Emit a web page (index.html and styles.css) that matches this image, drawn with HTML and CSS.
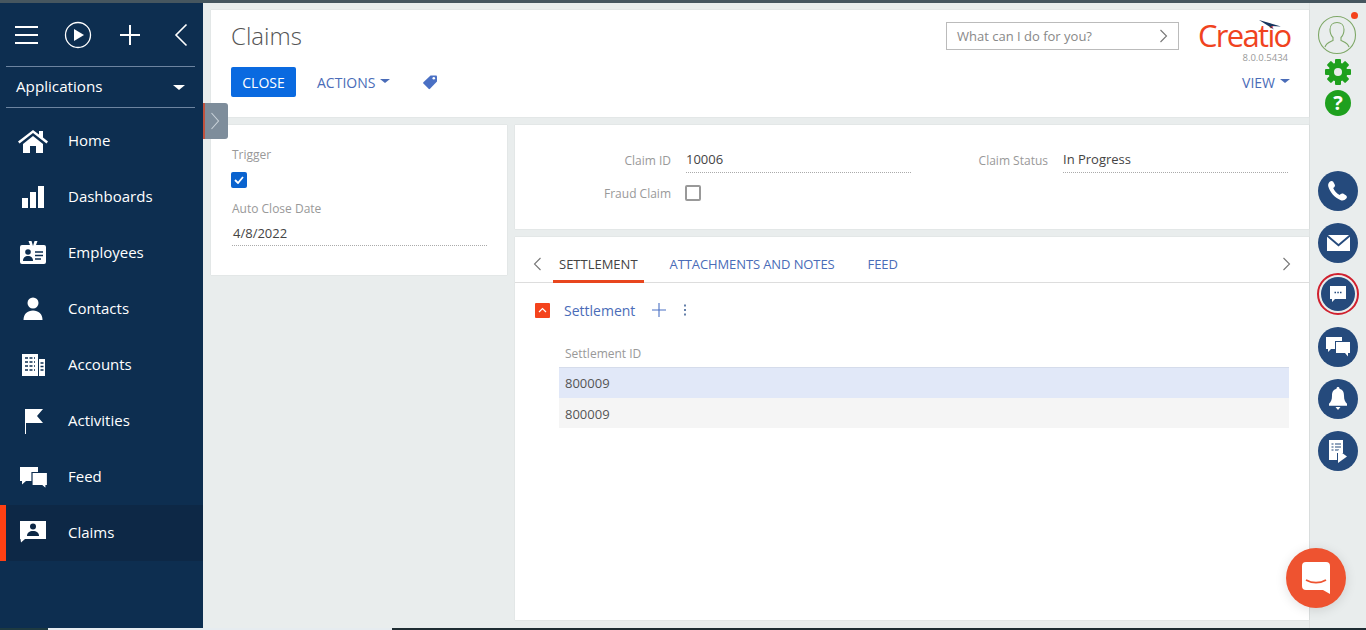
FILE: index.html
```html
<!DOCTYPE html>
<html lang="en">
<head>
<meta charset="UTF-8">
<title>Claims</title>
<link rel="stylesheet" href="styles.css">
</head>
<body>
<div class="app">
    <div class="strip-top"></div>
    <div class="shell">
        <!-- Menu lateral -->
        <aside class="sidebar">
            <div class="side-tools">
                <svg class="tool-burger" width="24" height="20" viewBox="0 0 24 20"><path d="M0 2h23M0 10h23M0 18h23" stroke="#fff" stroke-width="2"/></svg>
                <svg class="tool-play" width="28" height="28" viewBox="0 0 28 28"><circle cx="14" cy="14" r="12.5" fill="none" stroke="#fff" stroke-width="1.3"/><path d="M10 8l10 6-10 6z" fill="#fff"/></svg>
                <svg class="tool-plus" width="22" height="22" viewBox="0 0 22 22"><path d="M11 1v20M1 11h20" stroke="#fff" stroke-width="2"/></svg>
                <svg class="tool-back" width="14" height="24" viewBox="0 0 14 24"><path d="M12.5 1.5L2 12l10.5 10.5" fill="none" stroke="#fff" stroke-width="1.6"/></svg>
            </div>
            <div class="side-apps">
                <span class="apps-name">Applications</span>
                <span class="caret-white"></span>
            </div>
            <nav class="side-nav">
                <a class="nav-item">
                    <svg class="nav-icon" viewBox="0 0 32 32"><path d="M1 17.500L16 6l6 4.500V7h4v6.500l5 4-1.500 2L16 9 2.500 19.500z" fill="#fff"/><path d="M6 20L16 12l10 8v9h-7v-7h-6v7H6z" fill="#fff"/></svg>
                    <span>Home</span>
                </a>
                <a class="nav-item">
                    <svg class="nav-icon" viewBox="0 0 32 32"><path d="M5 18h6v10H5zM13 12h6v16h-6zM21 6h6v22h-6z" fill="#fff"/></svg>
                    <span>Dashboards</span>
                </a>
                <a class="nav-item">
                    <svg class="nav-icon" viewBox="0 0 32 32"><path d="M5 9h8l-1.500-4h9L19 9h8a2 2 0 0 1 2 2v15a2 2 0 0 1-2 2H5a2 2 0 0 1-2-2V11a2 2 0 0 1 2-2z" fill="#fff"/><path d="M14.500 5h3L16 10z" fill="#0d2e50"/><circle cx="11" cy="16" r="2.800" fill="#0d2e50"/><path d="M6 25c0-3.500 2-5 5-5s5 1.500 5 5z" fill="#0d2e50"/><path d="M18 16h8M18 19.500h8M18 23h6" stroke="#0d2e50" stroke-width="1.300"/></svg>
                    <span>Employees</span>
                </a>
                <a class="nav-item">
                    <svg class="nav-icon" viewBox="0 0 32 32"><circle cx="16" cy="11" r="5.500" fill="#fff"/><path d="M6.500 28c0-6 4-9.500 9.500-9.500s9.500 3.500 9.500 9.500z" fill="#fff"/></svg>
                    <span>Contacts</span>
                </a>
                <a class="nav-item">
                    <svg class="nav-icon" viewBox="0 0 32 32"><path d="M5 6h16v22H5zM22 11h6v17h-6z" fill="#fff"/><path d="M8 10h10M8 14h10M8 18h10M8 22h10" stroke="#0d2e50" stroke-width="1.500" stroke-dasharray="3 1.500"/><path d="M23.500 15h3M23.500 18.500h3M23.500 22h3" stroke="#0d2e50" stroke-width="1.300"/></svg>
                    <span>Accounts</span>
                </a>
                <a class="nav-item">
                    <svg class="nav-icon" viewBox="0 0 32 32"><path d="M8 5h1v25H8z" fill="#fff"/><path d="M8 5h18l-6 7 6 7H8z" fill="#fff"/></svg>
                    <span>Activities</span>
                </a>
                <a class="nav-item">
                    <svg class="nav-icon" viewBox="0 0 32 32"><path d="M3 7h18v14H9l-4 3.500V21H3z" fill="#fff"/><path d="M15 12.500h15.500v13H29V29l-4-3.500H15z" fill="#fff" stroke="#0d2e50" stroke-width="1.200"/></svg>
                    <span>Feed</span>
                </a>
                <a class="nav-item nav-active">
                    <svg class="nav-icon" viewBox="0 0 32 32"><path d="M3 5h26v18H8l-4 3.500-.5-3.500H3z" fill="#fff"/><circle cx="16" cy="10.500" r="3" fill="#0d2846"/><path d="M10 20c0-3.500 2.500-5 6-5s6 1.500 6 5z" fill="#0d2846"/></svg>
                    <span>Claims</span>
                </a>
            </nav>
        </aside>

        <main class="content">
            <section class="card head">
                <div class="head-top">
                    <h1 class="page-title">Claims</h1>
                    <div class="search-box">
                        <span>What can I do for you?</span>
                        <svg width="9" height="14" viewBox="0 0 9 14"><path d="M1.500 1L7.500 7l-6 6" fill="none" stroke="#777" stroke-width="1.100"/></svg>
                    </div>
                    <div class="logo">
                        <svg class="logo-swoosh" width="24" height="10" viewBox="0 0 24 10"><path d="M1 0l22 6.500-10-.5 3 3.500z" fill="#17365f"/></svg>
                        <div class="logo-name">Creatio</div>
                        <div class="logo-version">8.0.0.5434</div>
                    </div>
                </div>
                <div class="head-bottom">
                    <button class="btn-close">CLOSE</button>
                    <span class="link-caps">ACTIONS<span class="caret-blue"></span></span>
                    <svg class="tag-icon" width="16" height="16" viewBox="0 0 16 16"><path d="M8.500 1.500h5.500a1 1 0 0 1 1 1v5L8 14.800a1 1 0 0 1-1.400 0L1.400 9.600a1 1 0 0 1 0-1.400z" fill="#4a70c4"/><circle cx="11.800" cy="4.300" r="1.300" fill="#fff"/></svg>
                    <span class="link-caps view-link">VIEW<span class="caret-blue"></span></span>
                </div>
            </section>

            <div class="columns">
                <section class="card side-card">
                    <div class="lbl">Trigger</div>
                    <div class="check check-on">
                        <svg width="10" height="8" viewBox="0 0 10 8"><path d="M1 4l3 3 5-6" fill="none" stroke="#fff" stroke-width="1.800"/></svg>
                    </div>
                    <div class="lbl lbl-date">Auto Close Date</div>
                    <div class="val val-date">4/8/2022</div>
                </section>

                <div class="main-col">
                    <section class="card fields">
                        <div class="field-row">
                            <div class="field">
                                <span class="lbl field-lbl">Claim ID</span>
                                <span class="val field-val">10006</span>
                            </div>
                            <div class="field">
                                <span class="lbl field-lbl">Claim Status</span>
                                <span class="val field-val">In Progress</span>
                            </div>
                        </div>
                        <div class="field field-check">
                            <span class="lbl field-lbl">Fraud Claim</span>
                            <span class="check check-off"></span>
                        </div>
                    </section>

                    <section class="card tabs-card">
                        <div class="tabs">
                            <svg class="tab-arrow" width="9" height="14" viewBox="0 0 9 14"><path d="M7.500 1L1.500 7l6 6" fill="none" stroke="#777" stroke-width="1.100"/></svg>
                            <span class="tab tab-active">SETTLEMENT</span>
                            <span class="tab">ATTACHMENTS AND NOTES</span>
                            <span class="tab tab-feed">FEED</span>
                            <svg class="tab-arrow tab-next" width="9" height="14" viewBox="0 0 9 14"><path d="M1.500 1L7.500 7l-6 6" fill="none" stroke="#777" stroke-width="1.100"/></svg>
                        </div>
                        <div class="detail-head">
                            <span class="collapse">
                                <svg width="9" height="6" viewBox="0 0 9 6"><path d="M1 5l3.500-3.500L8 5" fill="none" stroke="#fff" stroke-width="1.200"/></svg>
                            </span>
                            <span class="detail-title">Settlement</span>
                            <svg class="detail-plus" width="14" height="14" viewBox="0 0 14 14"><path d="M7 0v14M0 7h14" stroke="#4a70c4" stroke-width="1.100"/></svg>
                            <svg class="detail-more" width="4" height="12" viewBox="0 0 4 12"><path d="M2 .5v2M2 5v2M2 9.500v2" stroke="#4a6a9c" stroke-width="1.700"/></svg>
                        </div>
                        <div class="grid-list">
                            <div class="grid-head">Settlement ID</div>
                            <div class="grid-row grid-selected">800009</div>
                            <div class="grid-row grid-alt">800009</div>
                        </div>
                    </section>
                </div>
            </div>

            <!-- Alça de abrir o painel -->
            <div class="panel-handle">
                <svg width="10" height="18" viewBox="0 0 10 18"><path d="M1.500 1l7 8-7 8" fill="none" stroke="#c9d2da" stroke-width="1.100"/></svg>
            </div>
        </main>

        <!-- Barra direita -->
        <aside class="rail">
            <div class="rail-user">
                <svg width="40" height="40" viewBox="0 0 40 40"><circle cx="20" cy="20" r="18.500" fill="none" stroke="#7fa868" stroke-width="1.100"/><path d="M8 32c1-4 5-5 8-6.500v-3c-2-2-3-4.500-3-8 0-4.500 3-7 7-7s7 2.500 7 7c0 3.500-1 6-3 8v3c3 1.500 7 2.500 8 6.500" fill="none" stroke="#7fa868" stroke-width="1.100"/></svg>
                <span class="user-dot"></span>
            </div>
            <svg class="rail-gear" width="26" height="26" viewBox="0 0 26 26">
                <g fill="#1ea01e">
                    <circle cx="13" cy="13" r="9.500"/>
                    <rect x="10" y="0" width="6" height="26" rx="1"/>
                    <rect x="10" y="0" width="6" height="26" rx="1" transform="rotate(45 13 13)"/>
                    <rect x="10" y="0" width="6" height="26" rx="1" transform="rotate(90 13 13)"/>
                    <rect x="10" y="0" width="6" height="26" rx="1" transform="rotate(135 13 13)"/>
                </g>
                <circle cx="13" cy="13" r="4" fill="#e9eded"/>
            </svg>
            <div class="rail-help">?</div>
            <div class="rail-actions">
                <div class="round-btn">
                    <svg width="22" height="22" viewBox="0 0 22 22"><path d="M3 1.500c1-.8 2.500-.8 3.200.3l1.500 2.700c.5 1 .3 2-.5 2.700l-1 .9c1 2.800 3.500 5.500 6.500 7l1-1c.8-.8 2-.9 2.800-.3l2.600 1.700c1 .7 1.100 2.100.2 3-1.500 1.700-3.500 2.500-5.500 1.700C7.500 17.500 2.800 12 1.300 6.500.8 4.500 1.500 2.700 3 1.500z" fill="#fff"/></svg>
                </div>
                <div class="round-btn">
                    <svg width="23" height="16" viewBox="0 0 24 18" preserveAspectRatio="none"><path d="M1 0h22L12 10z" fill="#fff"/><path d="M0 2l12 11L24 2v16H0z" fill="#fff"/></svg>
                </div>
                <div class="round-ring">
                    <div class="round-btn">
                        <svg width="18" height="18" viewBox="0 0 18 18"><path d="M1 1h16v13H6l-3 3v-3H1z" fill="#fff"/><path d="M5.500 7.500h1.500M8.300 7.500h1.500M11 7.500h1.500" stroke="#254a7c" stroke-width="1.300"/></svg>
                    </div>
                </div>
                <div class="round-btn">
                    <svg width="24" height="22" viewBox="0 0 24 22"><path d="M0 1h16v4H9v8H5l-3 3v-3H0z" fill="#fff"/><path d="M10 6h14v11h-2v3.500L19 17h-9z" fill="#fff"/></svg>
                </div>
                <div class="round-btn">
                    <svg width="20" height="24" viewBox="0 0 20 24"><path d="M10 0c1 0 1.500.7 1.500 1.700 3.500.8 4.500 3.500 4.500 7 0 4 1 6 3 8v2H1v-2c2-2 3-4 3-8 0-3.500 1-6.200 4.500-7C8.500.7 9 0 10 0z" fill="#fff"/><path d="M7.500 20h5L10 23z" fill="#fff"/></svg>
                </div>
                <div class="round-btn">
                    <svg width="20" height="24" viewBox="0 0 20 24"><path d="M1 1h14v13l-6 0v7H1z" fill="#fff"/><path d="M3.500 5h2M7 5h6M3.500 8h2M7 8h6M3.500 11h2M7 11h4" stroke="#254a7c" stroke-width="1.200"/><path d="M10 11l9 6.500-9 6.500z" fill="#fff"/></svg>
                </div>
            </div>
        </aside>
    </div>
    <div class="strip-bottom">
        <span class="sb-a"></span><span class="sb-b"></span><span class="sb-c"></span>
    </div>

    <!-- Botão do chat -->
    <div class="chat-fab">
        <svg width="28" height="32" viewBox="0 0 28 32"><path d="M4 0h20a4 4 0 0 1 4 4v28l-7-4H4a4 4 0 0 1-4-4V4a4 4 0 0 1 4-4z" fill="#fff"/><path d="M4 18c6 3.500 14 3.500 20 0" fill="none" stroke="#ee5330" stroke-width="1.800"/></svg>
    </div>
</div>
</body>
</html>
```

FILE: styles.css
```css
html, body {
    margin: 0;
    padding: 0;
    height: 100%;
    overflow: hidden;
}
body {
    font-family: "Open Sans", "Liberation Sans", sans-serif;
    background-color: #e9eded;
    color: #444;
}
.app {
    position: relative;
    display: flex;
    flex-direction: column;
    height: 630px;
}
.strip-top {
    height: 3px;
    background-color: #46565f;
}
.shell {
    flex: 1;
    display: flex;
    min-height: 0;
}
.strip-bottom {
    display: flex;
    height: 2px;
}
.sb-a {
    width: 48px;
    background-color: #1e3a40;
}
.sb-b {
    width: 344px;
    background-color: #e6ecf0;
}
.sb-c {
    flex: 1;
    background-color: #1f2d33;
}

/* Menu lateral */
.sidebar {
    width: 203px;
    flex-shrink: 0;
    background-color: #0d2e50;
    color: #fff;
}
.side-tools {
    display: flex;
    align-items: center;
    height: 63px;
    margin: 0 8px 0 6px;
    padding-left: 9px;
    border-bottom: 1px solid #6d84a0;
}
.tool-burger {
    margin-top: 1px;
}
.tool-play {
    margin-left: 25px;
}
.tool-plus {
    margin-left: 27px;
}
.tool-back {
    margin-left: 33px;
}
.side-apps {
    display: flex;
    align-items: center;
    justify-content: space-between;
    height: 40px;
    margin: 0 8px 0 6px;
    padding: 0 10px;
    border-bottom: 1px solid #6d84a0;
    font-size: 15.200px;
}
.apps-name {
    margin-top: -2px;
}
.caret-white {
    width: 0;
    height: 0;
    border-left: 6px solid transparent;
    border-right: 6px solid transparent;
    border-top: 5px solid #fff;
}
.side-nav {
    padding-top: 5px;
}
.nav-item {
    display: flex;
    align-items: center;
    gap: 19px;
    height: 56px;
    padding-left: 17px;
    font-size: 15px;
    color: #fff;
}
.nav-item span {
    margin-top: -2px;
}
.nav-icon {
    width: 32px;
    height: 32px;
    margin-top: -2px;
}
.nav-active {
    padding-left: 11px;
    border-left: 6px solid #ff4013;
    background-color: #0d2846;
}

/* Conteúdo */
.content {
    position: relative;
    flex: 1;
    display: flex;
    flex-direction: column;
    gap: 8px;
    padding: 7px 0 8px 8px;
    min-width: 0;
}
.card {
    background-color: #fff;
    box-shadow: 0 0 1px rgba(0, 0, 0, 0.15);
}
.head {
    height: 107px;
    padding: 0 20px;
    box-sizing: border-box;
}
.head-top {
    display: flex;
    align-items: flex-start;
    height: 57px;
}
.page-title {
    flex: 1;
    margin: 8px 0 0;
    font-size: 24px;
    font-weight: 300;
    line-height: 36px;
    color: #555;
}
.search-box {
    display: flex;
    align-items: center;
    justify-content: space-between;
    width: 233px;
    height: 28px;
    margin-top: 12px;
    padding: 0 10px;
    box-sizing: border-box;
    border: 1px solid #bbb;
    font-size: 13px;
    color: #888;
}
.logo {
    position: relative;
    width: 90px;
    margin-left: 19px;
    margin-right: 1px;
    padding-top: 9px;
}
.logo-swoosh {
    position: absolute;
    top: 10px;
    left: 60px;
}
.logo-name {
    height: 32px;
    font-family: "Open Sans", sans-serif;
    font-size: 31px;
    line-height: 32px;
    letter-spacing: -1.700px;
    color: #f0431e;
    white-space: nowrap;
}
.logo-version {
    margin-top: 1px;
    font-size: 9.500px;
    line-height: 12px;
    text-align: right;
    color: #999;
}
.head-bottom {
    display: flex;
    align-items: center;
    height: 30px;
}
.btn-close {
    width: 65px;
    height: 30px;
    border: none;
    border-radius: 2px;
    background-color: #0a6ae0;
    color: #fff;
    font-family: inherit;
    font-size: 14px;
}
.link-caps {
    display: flex;
    align-items: center;
    margin-left: 21px;
    font-size: 14px;
    color: #4a6cb8;
}
.caret-blue {
    width: 0;
    height: 0;
    margin-left: 5px;
    margin-top: -2px;
    border-left: 5px solid transparent;
    border-right: 5px solid transparent;
    border-top: 4px solid #4a6cb8;
}
.tag-icon {
    margin-left: 32px;
}
.view-link {
    margin-left: auto;
    margin-right: -1px;
}
.columns {
    flex: 1;
    display: flex;
    gap: 8px;
    min-height: 0;
}
.side-card {
    width: 296px;
    height: 150px;
    padding: 22px 20px 0 21px;
    box-sizing: border-box;
}
.lbl {
    font-size: 12px;
    line-height: 16px;
    color: #999;
}
.val {
    font-size: 13px;
    color: #444;
}
.check {
    display: flex;
    align-items: center;
    justify-content: center;
    width: 16px;
    height: 16px;
    box-sizing: border-box;
    border-radius: 2px;
}
.check-on {
    margin-top: 9px;
    margin-left: -1px;
    background-color: #0a63cf;
}
.check-off {
    border: 2px solid #999;
}
.lbl-date {
    margin-top: 13px;
}
.val-date {
    height: 29px;
    padding-left: 1px;
    padding-top: 7px;
    box-sizing: border-box;
    line-height: 18px;
    border-bottom: 1px dotted #aaa;
}
.main-col {
    flex: 1;
    display: flex;
    flex-direction: column;
    gap: 8px;
    min-width: 0;
}
.fields {
    height: 104px;
    padding-top: 24px;
    box-sizing: border-box;
}
.field-row {
    display: flex;
}
.field {
    display: flex;
    align-items: flex-start;
    width: 397px;
}
.field-row .field:first-child {
    width: 396px;
}
.field-lbl {
    width: 156px;
    padding-top: 4px;
    text-align: right;
}
.field-row .field:nth-child(2) .field-lbl {
    width: 137px;
}
.field-val {
    width: 225px;
    height: 23px;
    margin-left: 15px;
    line-height: 20px;
    border-bottom: 1px dotted #aaa;
}
.field-check {
    align-items: center;
    margin-top: 10px;
}
.field-check .field-lbl {
    padding-top: 3px;
}
.field-check .check {
    margin-left: 14px;
}
.tabs-card {
    flex: 1;
}
.tabs {
    display: flex;
    align-items: flex-start;
    height: 46px;
    padding: 0 18px;
    border-bottom: 1px solid #ddd;
    box-sizing: border-box;
}
.tab-arrow {
    flex-shrink: 0;
    margin-top: 20px;
}
.tab {
    display: flex;
    align-items: center;
    height: 45px;
    margin-left: 20px;
    padding: 9px 6px 0;
    box-sizing: border-box;
    font-size: 13px;
    letter-spacing: -0.100px;
    color: #4a6cb8;
    white-space: nowrap;
}
.tab-active {
    height: 46px;
    margin-left: 11px;
    margin-bottom: -1px;
    padding-top: 11px;
    border-bottom: 3px solid #e8461e;
    letter-spacing: 0;
    color: #444;
}
.tab-feed {
    margin-left: 21px;
}
.tab-next {
    margin-left: auto;
}
.detail-head {
    display: flex;
    align-items: center;
    height: 30px;
    margin-top: 12px;
    padding-left: 20px;
}
.collapse {
    display: flex;
    align-items: center;
    justify-content: center;
    width: 15px;
    height: 15px;
    background-color: #f4431c;
    border-radius: 1px;
}
.detail-title {
    margin-left: 14px;
    font-size: 14px;
    color: #4a6cb8;
}
.detail-plus {
    margin-left: 17px;
}
.detail-more {
    margin-left: 17px;
}
.grid-list {
    margin: 13px 20px 0 44px;
}
.grid-head {
    height: 29px;
    padding: 7px 6px 0;
    box-sizing: border-box;
    font-size: 12px;
    line-height: 18px;
    color: #999;
}
.grid-row {
    height: 30px;
    padding-left: 6px;
    font-size: 13px;
    line-height: 32px;
    color: #555;
}
.grid-selected {
    height: 31px;
    line-height: 30px;
    background-color: #e1e8f8;
    border-top: 1px solid #d5dceb;
    box-sizing: border-box;
}
.grid-alt {
    background-color: #f5f5f5;
}
.panel-handle {
    position: absolute;
    top: 100px;
    left: 0;
    display: flex;
    align-items: center;
    justify-content: center;
    width: 19px;
    height: 36px;
    padding-right: 4px;
    border-left: 2px solid #c0533f;
    border-radius: 0 3px 3px 0;
    background-color: #7e8d9b;
}

/* Barra direita */
.rail {
    width: 57px;
    flex-shrink: 0;
    display: flex;
    flex-direction: column;
    align-items: center;
    border-left: 1px solid #dfe3e3;
    box-sizing: border-box;
    padding-top: 12px;
}
.rail-user {
    position: relative;
    height: 40px;
    margin-right: 2px;
}
.user-dot {
    position: absolute;
    top: -3px;
    right: -1px;
    width: 7px;
    height: 7px;
    border-radius: 50%;
    background-color: #f4431c;
}
.rail-gear {
    margin-top: 4px;
}
.rail-help {
    width: 26px;
    height: 26px;
    margin-top: 5px;
    border-radius: 50%;
    background-color: #1ea01e;
    color: #fff;
    font-size: 20px;
    font-weight: 700;
    line-height: 26px;
    text-align: center;
}
.rail-actions {
    display: flex;
    flex-direction: column;
    align-items: center;
    gap: 12px;
    margin-top: 55px;
}
.round-btn {
    display: flex;
    align-items: center;
    justify-content: center;
    width: 40px;
    height: 40px;
    border-radius: 50%;
    background-color: #254a7c;
}
.round-ring {
    display: flex;
    margin: -2px 0 0;
    padding: 2px;
    border: 2px solid #d0202e;
    border-radius: 50%;
}
.round-ring .round-btn {
    width: 34px;
    height: 34px;
}

/* Botão do chat */
.chat-fab {
    position: absolute;
    left: 1286px;
    top: 548px;
    display: flex;
    align-items: center;
    justify-content: center;
    width: 60px;
    height: 60px;
    border-radius: 50%;
    background-color: #ee5330;
    box-shadow: 0 2px 12px rgba(0, 0, 0, 0.12);
}
```
